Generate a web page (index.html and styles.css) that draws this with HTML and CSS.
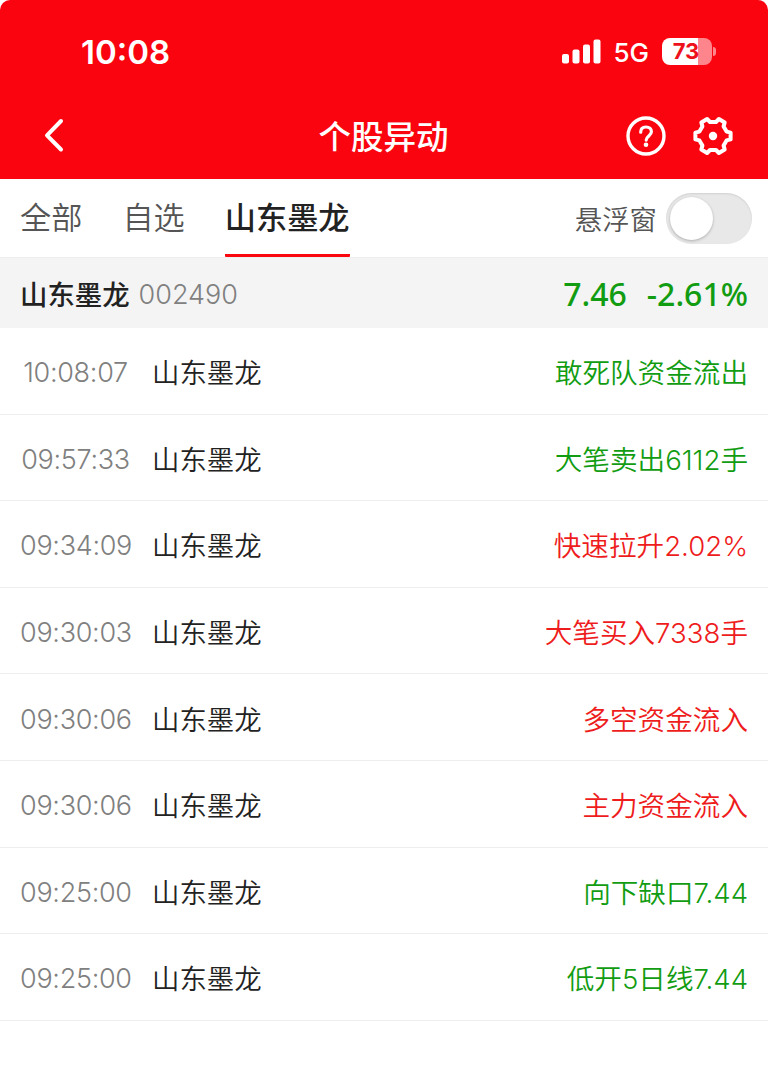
FILE: index.html
```
<!DOCTYPE html>
<html lang="zh-CN">
<head>
  <meta charset="UTF-8">
  <title>个股异动</title>
  <link rel="stylesheet" href="styles.css">
</head>
<body>

<header class="header">
  <div class="status">
    <span class="clock">10:08</span>
    <div class="status-right">
      <svg class="signal" width="39" height="25" viewBox="0 0 39 25" fill="#fff">
        <rect x="0" y="15" width="7" height="9.5" rx="2"/>
        <rect x="10.5" y="10.5" width="7" height="14" rx="2"/>
        <rect x="21" y="5.5" width="7" height="19" rx="2"/>
        <rect x="31.5" y="0.5" width="7" height="24" rx="2"/>
      </svg>
      <span class="network">5G</span>
      <div class="battery"><span>73</span></div>
      <i class="battery-tip"></i>
    </div>
  </div>
  <nav class="navbar">
    <svg class="back" width="22" height="36" viewBox="0 0 22 36" fill="none" stroke="#fff" stroke-width="4" stroke-linecap="round" stroke-linejoin="round">
      <path d="M18 3L4 17.300l14 14.200"/>
    </svg>
    <h1>个股异动</h1>
    <div class="tools">
      <svg width="40" height="40" viewBox="0 0 40 40" fill="none" stroke="#fff">
        <circle cx="20" cy="20" r="18" stroke-width="3.4"/>
        <path d="M14.700 16.200C14.700 12.900 16.800 11 20 11s5.400 1.900 5.400 4.800c0 3.900-5.200 4.400-5.200 8.300" stroke-width="3.200" stroke-linecap="round"/>
        <circle cx="20" cy="28.700" r="2.300" fill="#fff" stroke="none"/>
      </svg>
      <svg width="42" height="42" viewBox="-21 -21 42 42" fill="none" stroke="#fff" stroke-width="4" stroke-linejoin="round">
        <path d="M17.600-3.400V3.400L13.600 4.400 10.600 9.600 11.700 13.600 5.900 17 3 14H-3L-5.900 17-11.700 13.600-10.600 9.600-13.600 4.400-17.600 3.400V-3.400L-13.600-4.400-10.600-9.600-11.700-13.600-5.900-17-3-14H3L5.900-17 11.700-13.600 10.600-9.600 13.600-4.400Z"/>
        <circle r="4.200" fill="#fff" stroke="none"/>
      </svg>
    </div>
  </nav>
</header>

<div class="tabs">
  <span class="tab">全部</span>
  <span class="tab">自选</span>
  <span class="tab active">山东墨龙</span>
  <div class="float-switch">
    <span>悬浮窗</span>
    <div class="switch"></div>
  </div>
</div>

<div class="summary">
  <b>山东墨龙</b>
  <span class="code">002490</span>
  <span class="price">7.46</span>
  <span class="change">-2.61%</span>
</div>

<ul class="list">
  <li><span class="time">10:08:07</span><span class="name">山东墨龙</span><span class="event down">敢死队资金流出</span></li>
  <li><span class="time">09:57:33</span><span class="name">山东墨龙</span><span class="event down">大笔卖出6112手</span></li>
  <li><span class="time">09:34:09</span><span class="name">山东墨龙</span><span class="event up">快速拉升2.02%</span></li>
  <li><span class="time">09:30:03</span><span class="name">山东墨龙</span><span class="event up">大笔买入7338手</span></li>
  <li><span class="time">09:30:06</span><span class="name">山东墨龙</span><span class="event up">多空资金流入</span></li>
  <li><span class="time">09:30:06</span><span class="name">山东墨龙</span><span class="event up">主力资金流入</span></li>
  <li><span class="time">09:25:00</span><span class="name">山东墨龙</span><span class="event down">向下缺口7.44</span></li>
  <li><span class="time">09:25:00</span><span class="name">山东墨龙</span><span class="event down">低开5日线7.44</span></li>
</ul>

</body>
</html>
```
FILE: styles.css
```
* {
  box-sizing: border-box;
}
body {
  margin: 0;
  background: #fff;
  color: #222;
  font-family: Inter, "Noto Sans CJK SC", sans-serif;
  font-size: 27.4px;
}
.header {
  height: 179px;
  background: #fa050f;
  color: #fff;
  border-radius: 10px 10px 0 0;
}
.status {
  height: 92px;
  padding: 11px 52px 0 81px;
  display: flex;
  align-items: center;
  justify-content: space-between;
}
.clock {
  font-size: 33px;
  font-weight: 600;
}
.status-right {
  display: flex;
  align-items: center;
}
.network {
  margin: 2px 13px 0 12px;
  font-size: 26px;
  font-weight: 500;
}
.battery {
  width: 50px;
  height: 27px;
  border-radius: 8px;
  background: linear-gradient(to right, #fff 36px, #ff858c 36px);
  color: #ee101a;
  font-size: 22px;
  font-weight: 700;
  line-height: 27px;
  text-align: center;
  text-indent: -2px;
}
.battery-tip {
  width: 3px;
  height: 9px;
  margin-left: 1px;
  border-radius: 0 4px 4px 0;
  background: #ff858c;
}
.navbar {
  height: 87px;
  padding: 0 34px 0 43px;
  display: grid;
  grid-template-columns: 1fr auto 1fr;
  align-items: center;
}
.navbar h1 {
  margin: 4px 10px 0 0;
  font-size: 32.5px;
  font-weight: 500;
  line-height: 48px;
}
.tools {
  display: flex;
  align-items: center;
  justify-content: flex-end;
  gap: 26px;
}
.tabs {
  height: 79px;
  padding: 0 16px 0 20px;
  display: flex;
  border-bottom: 1px solid #eee;
}
.tab {
  margin-right: 40px;
  color: #555;
  font-size: 31.2px;
  font-weight: 350;
  line-height: 78px;
}
.tab.active {
  height: 78px;
  color: #222;
  font-weight: 500;
  border-bottom: 3px solid #f9060f;
  border-radius: 1px;
}
.float-switch {
  margin-left: auto;
  display: flex;
  align-items: center;
  gap: 9px;
  color: #555;
  font-weight: 350;
}
.switch {
  width: 86px;
  height: 51px;
  padding: 4px;
  border-radius: 26px;
  background: #e8e8e8;
  box-shadow: inset 0 1px 2px rgba(0,0,0,0.1);
}
.switch::before {
  content: "";
  display: block;
  width: 43px;
  height: 43px;
  border-radius: 50%;
  background: #fff;
  box-shadow: 0 1px 3px rgba(0,0,0,0.25);
}
.summary {
  height: 70px;
  padding: 0 20px;
  display: flex;
  align-items: center;
  background: #f4f4f4;
}
.summary b {
  font-weight: 500;
}
.code {
  margin: 2px 0 0 9px;
  color: #808080;
  font-size: 27px;
  font-weight: 300;
}
.price, .change {
  margin-top: 1px;
  color: #129c12;
  font-family: "Noto Sans", sans-serif;
  font-size: 32px;
  font-weight: 500;
}
.price {
  margin-left: auto;
  margin-right: 20px;
}
.list {
  margin: 0;
  padding: 0;
  list-style: none;
}
.list li {
  height: 86.6px;
  padding: 1px 20px 0;
  display: flex;
  align-items: center;
  border-bottom: 1px solid #eee;
  font-weight: 350;
}
.time {
  width: 111px;
  margin-top: 3px;
  color: #808080;
  font-size: 27px;
  font-weight: 350;
  letter-spacing: -0.3px;
  text-align: center;
}
.name {
  margin-left: 21px;
}
.event {
  margin-left: auto;
  font-size: 27.6px;
}
.up {
  color: #ee1c1c;
}
.down {
  color: #129c12;
}
```
